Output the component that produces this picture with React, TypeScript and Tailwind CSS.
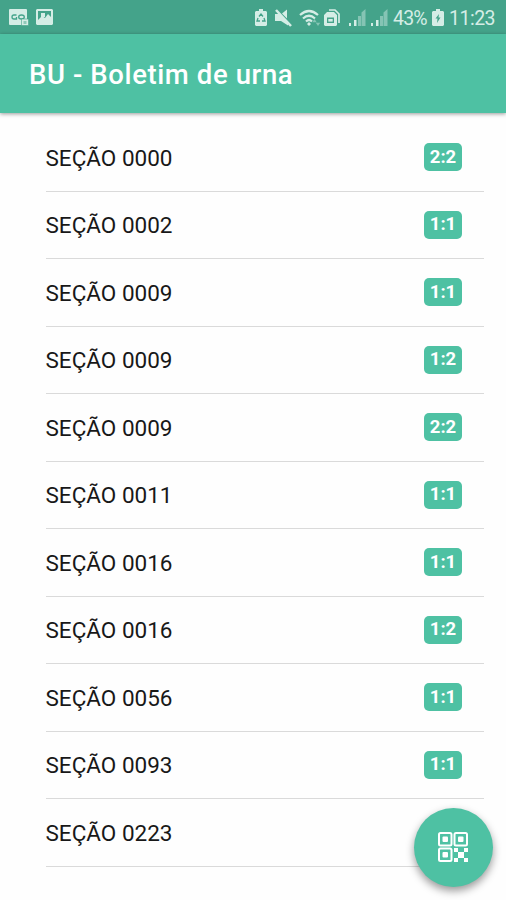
import type { ReactNode } from 'react';

interface Section {
    code: string;
    pages: string;
}

const sections: Section[] = [
    { code: '0000', pages: '2:2' },
    { code: '0002', pages: '1:1' },
    { code: '0009', pages: '1:1' },
    { code: '0009', pages: '1:2' },
    { code: '0009', pages: '2:2' },
    { code: '0011', pages: '1:1' },
    { code: '0016', pages: '1:1' },
    { code: '0016', pages: '1:2' },
    { code: '0056', pages: '1:1' },
    { code: '0093', pages: '1:1' },
    { code: '0223', pages: '' },
];

function Icon({ className, box, children }: { className: string; box: string; children: ReactNode }) {
    return (
        <svg className={`shrink-0 ${className}`} viewBox={box} fill="currentColor">
            {children}
        </svg>
    );
}

function Signal({ className }: { className: string }) {
    return (
        <Icon className={className} box="0 0 17 18">
            <path d="M0 14h2v3H0zM5 11h2.5v6H5z" />
            <path d="M9 7h3v10H9zM12.5 3.5 16.5 0v17h-4z" opacity=".45" />
        </Icon>
    );
}

function StatusBar() {
    return (
        <div className="flex h-[34px] items-center bg-[#44a38a] pt-px pl-[9px] text-[#d5ede6]">
            <Icon className="h-[17px] w-5" box="0 0 20 17">
                <path d="M1 0h16a1 1 0 0 1 1 1v14a1 1 0 0 1-1 1H1a1 1 0 0 1-1-1V1a1 1 0 0 1 1-1z" />
                <path d="M7.5 6H5a2 2 0 0 0 0 4h2.5V8" fill="none" stroke="#44a38a" strokeWidth="1.3" />
                <ellipse cx="12.5" cy="8" rx="2.8" ry="2" fill="none" stroke="#44a38a" strokeWidth="1.3" />
                <path d="M12.5 10H19.5v6.5h-7z" stroke="#44a38a" strokeWidth=".6" />
                <path d="M14.5 12h3v3h-3z" fill="#8fc9b9" />
            </Icon>
            <Icon className="ml-[7px] h-[17px] w-[17px]" box="0 0 17 17">
                <path d="M1 0h15l1 1v14l-1 1H1l-1-1V1z" />
                <path d="M2 2h13v6l-3-3-3 4-3-2-4 4z" fill="#44a38a" />
                <path d="M5 4h4v4H5z" />
            </Icon>

            <Icon className="ml-[202px] h-[17px] w-3" box="0 0 12 17">
                <path d="M4 0h4v2h3l1 1v13l-1 1H1l-1-1V3l1-1h3z" />
                <path d="M4 7.5 6 5l2 2.5M3 9l-1 3h3M9 9l1 3H7" fill="none" stroke="#44a38a" strokeWidth="1.3" />
            </Icon>
            <Icon className="ml-2 h-[18px] w-[17px]" box="0 0 17 18">
                <path d="M0 5h5l8 8v3.5L6 12H0zM7 4.5l5-4v9z" />
                <path d="m1 1 15 16" fill="none" stroke="currentColor" strokeWidth="2.5" />
            </Icon>
            <Icon className="ml-[7px] h-[18px] w-[22px]" box="0 0 22 18">
                <path d="M1 6q9-8 18 0M4 9.5q6-5.5 12 0M7 12.5q3-3 6 0" fill="none" stroke="currentColor" strokeWidth="2.2" />
                <path d="m10 13 2 2-2 2-2-2z" />
                <path d="m15.5 10 2.2 3.2h-4.4zM19 17l-2.2-3.2h4.4z" opacity=".45" />
            </Icon>
            <Icon className="ml-[3px] h-[18px] w-4" box="0 0 16 18">
                <path d="M5 1h6l4 4v9" fill="none" stroke="currentColor" strokeWidth="1.7" />
                <path fillRule="evenodd" d="M3 3h7l3 3v10l-1 1H1l-1-1V6zM3 8.5V14h7V8.5z" />
                <path d="M4.3 10h4.4v2.6H4.3z" />
            </Icon>
            <Signal className="ml-[9px] h-[18px] w-[17px]" />
            <Signal className="ml-[5px] h-[18px] w-[17px]" />
            <span className="ml-[5px] w-[34px] whitespace-nowrap pt-[3px] text-[19.5px] leading-none tracking-[-0.8px]">43%</span>
            <Icon className="ml-[5px] h-[17px] w-3" box="0 0 12 17">
                <path d="M4 0h4v2h3l1 1v13l-1 1H1l-1-1V3l1-1h3z" />
                <path d="M7 5 3.5 9.5h2L5 14l3.5-5.5h-2z" fill="#44a38a" />
            </Icon>
            <span className="ml-[5px] whitespace-nowrap pt-[3px] text-[19.5px] leading-none tracking-[-0.5px]">11:23</span>
        </div>
    );
}

function QrIcon() {
    return (
        <svg className="h-[30px] w-[30px]" viewBox="0 0 30 30" fill="currentColor">
            <g fill="none" stroke="currentColor" strokeWidth="2">
                <rect x="1" y="1" width="12.5" height="12.5" rx="1.5" />
                <rect x="16.5" y="1" width="12.5" height="12.5" rx="1.5" />
                <rect x="1" y="16.5" width="12.5" height="12.5" rx="1.5" />
            </g>
            <rect x="4.5" y="4.5" width="5.5" height="5.5" rx="1" />
            <rect x="20" y="4.5" width="5.5" height="5.5" rx="1" />
            <rect x="4.5" y="20" width="5.5" height="5.5" rx="1" />
            <path d="M16 16h4v4h-4zM26 16h4v4h-4zM20 20h6v6h-6zM16 26h4v4h-4zM26 26h4v4h-4z" />
        </svg>
    );
}

export default function App() {
    return (
        <div className="relative h-[900px] w-full overflow-hidden bg-[#fefefe] font-['Roboto',sans-serif]">
            <StatusBar />
            <header className="flex h-[78.5px] items-center bg-[#4ec1a3] pt-[3px] pl-[29px] shadow-[0_1px_4px_rgba(0,0,0,0.4)]">
                <h1 className="whitespace-nowrap text-[27.5px] font-medium leading-none tracking-[0.6px] text-white">BU - Boletim de urna</h1>
            </header>

            <ul className="mr-[22px] ml-[45.5px] pt-[11.5px]">
                {sections.map((section, i) => (
                    <li key={i} className="flex h-[67.5px] items-center justify-between border-b border-[#dadada] pr-[22px]">
                        <span className="whitespace-nowrap pt-px text-[22.5px] leading-none text-[#181818]">SEÇÃO {section.code}</span>
                        {section.pages && (
                            <span className="flex h-7 w-[38px] items-center justify-center rounded-[5px] bg-[#4ec1a3] pb-px text-[18.5px] font-bold leading-none text-white">
                                {section.pages}
                            </span>
                        )}
                    </li>
                ))}
            </ul>

            {/* Scan button */}
            <button
                aria-label="QR code"
                className="absolute right-[13px] bottom-[13px] flex h-[79px] w-[79px] items-center justify-center rounded-full bg-[#4ec1a3] pr-px pb-px text-white shadow-[0_4px_9px_rgba(0,0,0,0.4)]"
            >
                <QrIcon />
            </button>
        </div>
    );
}
